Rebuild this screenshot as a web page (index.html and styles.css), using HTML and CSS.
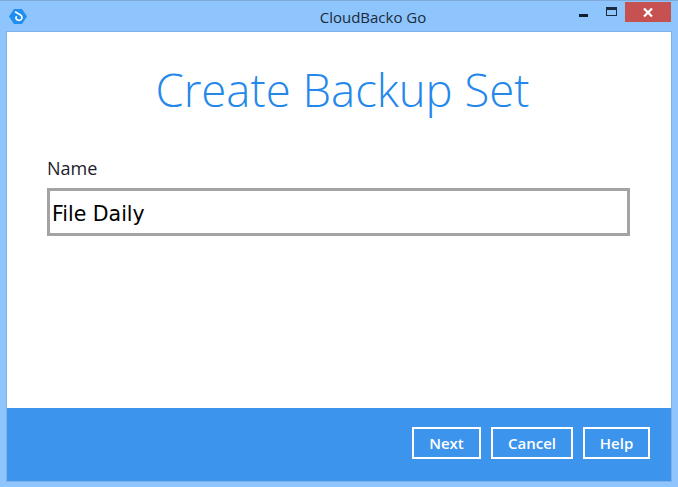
FILE: index.html
```html
<!DOCTYPE html>
<html lang="en">
<head>
<meta charset="utf-8">
<title>CloudBacko Go</title>
<link rel="stylesheet" href="styles.css">
</head>
<body>
<div class="window">
  <header class="titlebar">
    <svg class="app-icon" width="18" height="15" viewBox="0 0 18 15" aria-hidden="true">
      <path d="M5 0h8l5 7.500-5 7.500H5L0 7.500z" fill="#1f8ef1"/>
      <path d="M6 2.800l5.200 3c2 1.100 2.300 3.400 1 4.700-1.200 1.200-3.600 1-4.700-.2-1-1.100-.7-2.300.4-2.800" fill="none" stroke="#fff" stroke-width="1.700"/>
    </svg>
    <span class="window-title">CloudBacko Go</span>
    <div class="controls">
      <span class="ctl ctl-min"><i class="min-glyph"></i></span>
      <span class="ctl ctl-max"><i class="max-glyph"></i></span>
      <span class="ctl ctl-close">
        <svg width="10" height="9" viewBox="0 0 10 9" aria-hidden="true"><path d="M1 .5l8 8M9 .5l-8 8" stroke="#fff" stroke-width="2.200" fill="none"/></svg>
      </span>
    </div>
  </header>
  <div class="client">
    <main class="content">
      <h1 class="heading">Create Backup Set</h1>
      <label class="field-label" for="name">Name</label>
      <input class="field-input" id="name" type="text" value="File Daily">
    </main>
    <footer class="footer">
      <button class="btn btn-next">Next</button>
      <button class="btn btn-cancel">Cancel</button>
      <button class="btn btn-help">Help</button>
    </footer>
  </div>
</div>
</body>
</html>
```
FILE: styles.css
```css
* { box-sizing: border-box; }
html, body { margin: 0; padding: 0; }
body { width: 678px; height: 487px; overflow: hidden; font-family: "Open Sans", sans-serif; }
.window {
  width: 678px; height: 487px;
  background: #8fc5fd;
  border-top: 1px solid #7fa9d8;
  display: flex; flex-direction: column;
  padding: 0 7px 6px;
}
.titlebar {
  height: 31px; flex: none;
  position: relative;
  display: flex; align-items: center; justify-content: center;
  padding-left: 68px;
}
.app-icon { position: absolute; left: 2px; top: 8px; }
.window-title { font-size: 15px; color: #1a2a3a; }
.controls {
  position: absolute; right: 0; top: 1px;
  display: flex; align-items: flex-start;
}
.ctl { display: flex; align-items: center; justify-content: center; height: 20px; }
.ctl-min { width: 29px; }
.ctl-max { width: 27px; }
.ctl-close { width: 46px; background: #c75050; }
.min-glyph { display: block; width: 9px; height: 3px; background: #10202f; margin-top: 7px; }
.max-glyph { display: block; width: 11px; height: 9px; border: 1.500px solid #1c2c3c; border-top-width: 3px; margin-top: -2px; }
.client {
  flex: 1; display: flex; flex-direction: column;
  background: #fff;
  box-shadow: 0 0 0 1px #7fb0e6;
}
.content { flex: 1; padding: 0 41px 0 40px; display: flex; flex-direction: column; }
.heading {
  margin: 0; padding: 26px 0 0 8px;
  font-size: 45.500px; line-height: 62px; font-weight: 300;
  color: #2488ea; text-align: center;
}
.field-label { margin-top: 36px; font-size: 18px; line-height: 24px; color: #1c1c2c; }
.field-input {
  margin-top: 8px; height: 48px; width: 100%;
  border: 3px solid #a3a3a3; outline: none;
  padding: 4px 2px 0;
  font-family: "DejaVu Sans", sans-serif; font-size: 20.500px; color: #000;
  background: #fff;
}
.footer {
  height: 73px; flex: none;
  background: #3d94ec;
  display: flex; align-items: center; justify-content: flex-end;
  gap: 10px; padding: 0 21px 3px 0;
}
.btn {
  height: 32px; padding: 0;
  background: transparent; color: #fff;
  border: 2px solid #fff;
  font-family: "Open Sans", sans-serif; font-size: 15px; font-weight: 600;
}
.btn-next { width: 69px; }
.btn-cancel { width: 82px; }
.btn-help { width: 67px; }
```
